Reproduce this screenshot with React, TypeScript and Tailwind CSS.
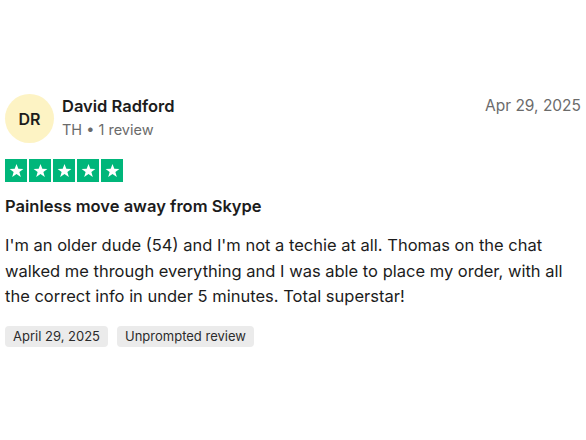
const Star = () => (
  <div className="flex h-[23px] w-[22px] items-center justify-center bg-[#00b67a]">
    <svg width="15" height="15" viewBox="0 0 24 24" fill="white">
      <path d="M12 1.5l2.9 7.6 8.1.3-6.4 5 2.3 7.8L12 17.7l-6.9 4.5 2.3-7.8-6.4-5 8.1-.3z" />
    </svg>
  </div>
)

const App = () => {
  return (
    <div className="h-[440px] w-[586px] bg-white px-[5px] pt-[94px] font-['Inter','Liberation_Sans',sans-serif] text-[#1c1c1c]">
      <div className="flex items-start justify-between">
        <div className="flex gap-[8px]">
          <div className="flex h-[49px] w-[49px] items-center justify-center rounded-full bg-[#fdf3c4] text-[16px] font-semibold text-[#1c1c1c]">
            DR
          </div>
          <div className="flex flex-col pt-[1px]">
            <div className="text-[16.5px] leading-[22px] font-semibold">David Radford</div>
            <div className="mt-[3px] text-[14.5px] leading-[20px] text-[#6b6b6b]">TH • 1 review</div>
          </div>
        </div>
        <div className="pt-[1px] text-[15.5px] leading-[22px] text-[#6b6b6b]">Apr 29, 2025</div>
      </div>

      <div className="mt-[16px] flex gap-[2px]">
        <Star />
        <Star />
        <Star />
        <Star />
        <Star />
      </div>

      <div className="mt-[13px] text-[16.5px] leading-[22px] font-semibold">Painless move away from Skype</div>

      <p className="mt-[16px] text-[16.5px] leading-[25.5px]">
        I'm an older dude (54) and I'm not a techie at all. Thomas on the chat walked me through everything and I was able to place my order, with all the correct info in under 5 minutes. Total superstar!
      </p>

      <div className="mt-[16px] flex gap-[9px]">
        <span className="rounded-[4px] bg-[#ebebeb] px-[8px] text-[13px] leading-[21px] text-[#2c2c2c]">April 29, 2025</span>
        <span className="rounded-[4px] bg-[#ebebeb] px-[8px] text-[13px] leading-[21px] text-[#2c2c2c]">Unprompted review</span>
      </div>
    </div>
  )
}

export default App
